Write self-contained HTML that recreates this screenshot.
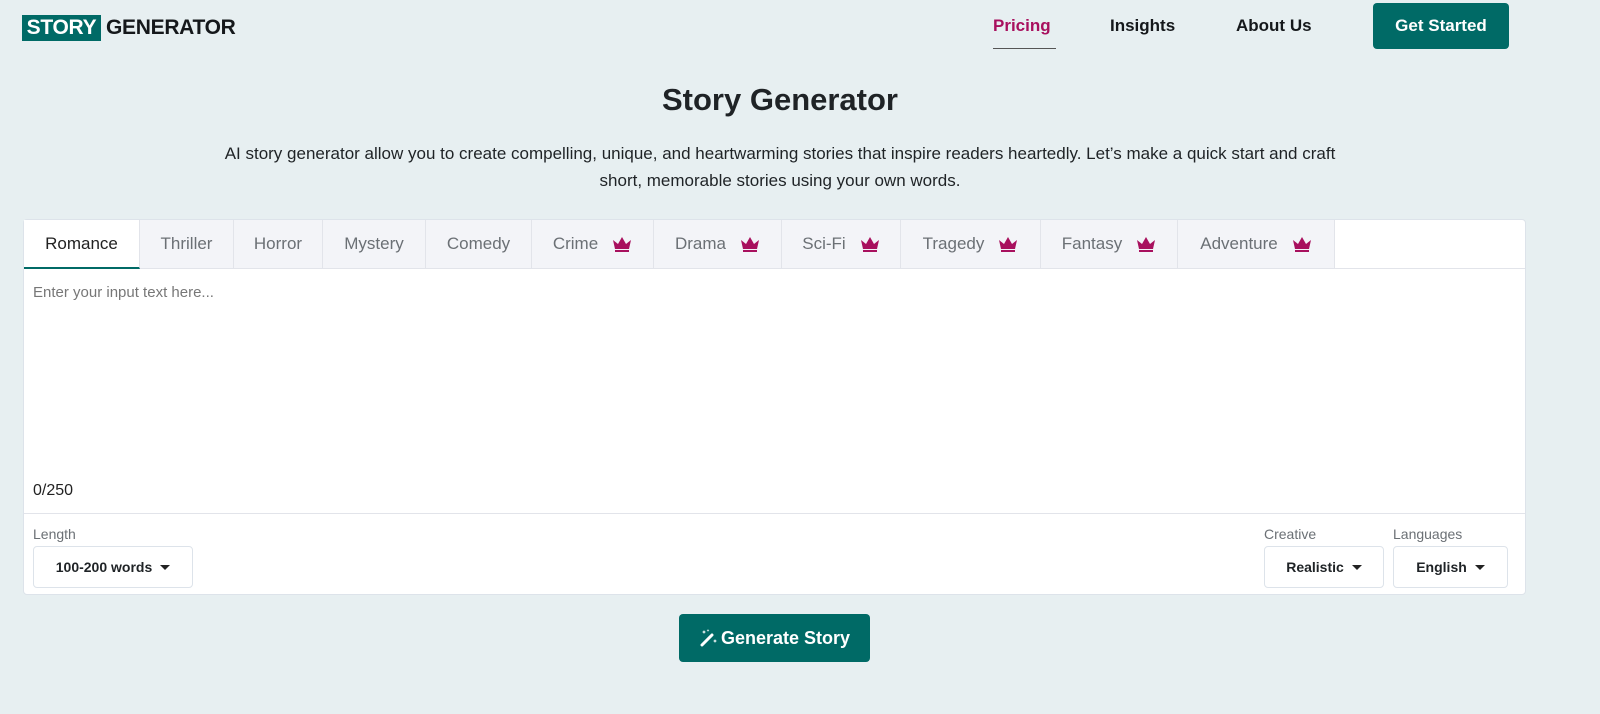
<!DOCTYPE html><html><head><style>
*{box-sizing:border-box;margin:0;padding:0}
body{width:1600px;height:714px;background:#e7eff1;font-family:"Liberation Sans",Arial,sans-serif;position:relative;overflow:hidden;color:#1f2326}
.a{position:absolute}
.logo1{left:22px;top:15px;width:79px;height:26px;background:#006a66;color:#fff;font-weight:700;font-size:21px;line-height:26px;text-align:center;letter-spacing:-0.3px}
.logo2{left:106px;top:15px;font-weight:700;font-size:21px;line-height:26px;color:#15181b;letter-spacing:-0.3px}
.nav{top:16px;font-weight:700;font-size:17px;color:#15181b}
.card{left:23px;top:219px;width:1503px;height:376px;background:#fff;border:1px solid #dde3ea;border-radius:4px}
.tab{top:0;height:49px;background:#f3f4f8;border-right:1px solid #e2e4ea;border-bottom:1px solid #e2e4ea;font-size:17px;color:#6b7075;display:flex;align-items:center;justify-content:center;gap:14px}
.crown{width:20px;height:16px}
.sel{border:1px solid #dde3ea;border-radius:4px;background:#fff;font-weight:700;font-size:14px;display:flex;align-items:center;justify-content:center;gap:8px;height:42px}
.car{border-left:5px solid transparent;border-right:5px solid transparent;border-top:5px solid #222}
.lab{font-size:14px;color:#6b7075}
</style></head><body>
<div class="a logo1">STORY</div><div class="a logo2">GENERATOR</div>
<div class="a nav" style="left:993px;color:#a8105e">Pricing</div>
<div class="a" style="left:993px;top:48px;width:63px;height:1px;background:#555"></div>
<div class="a nav" style="left:1110px">Insights</div>
<div class="a nav" style="left:1236px">About Us</div>
<div class="a" style="left:1373px;top:3px;width:136px;height:46px;background:#006a66;border-radius:4px;color:#fff;font-weight:700;font-size:17px;line-height:46px;text-align:center">Get Started</div>
<div class="a" style="left:0;width:1560px;top:82px;text-align:center;font-weight:700;font-size:31px">Story Generator</div>
<div class="a" style="left:172px;width:1216px;top:140px;text-align:center;font-size:17px;line-height:27px">AI story generator allow you to create compelling, unique, and heartwarming stories that inspire readers heartedly. Let’s make a quick start and craft<br>short, memorable stories using your own words.</div>
<div class="a card">
<div class="a tab" style="left:0;width:116px;background:#fff;color:#222;border-bottom:2px solid #006a66">Romance</div>
<div class="a tab" style="left:116px;width:94px">Thriller</div>
<div class="a tab" style="left:210px;width:89px">Horror</div>
<div class="a tab" style="left:299px;width:103px">Mystery</div>
<div class="a tab" style="left:402px;width:106px">Comedy</div>
<div class="a tab" style="left:508px;width:122px">Crime<svg class="crown" viewBox="0 0 20 16"><path d="M1 4l5 4 4-7 4 7 5-4-2 9H3z M3 14h14v2H3z" fill="#a8105e"/></svg></div>
<div class="a tab" style="left:630px;width:128px">Drama<svg class="crown" viewBox="0 0 20 16"><path d="M1 4l5 4 4-7 4 7 5-4-2 9H3z M3 14h14v2H3z" fill="#a8105e"/></svg></div>
<div class="a tab" style="left:758px;width:119px">Sci-Fi<svg class="crown" viewBox="0 0 20 16"><path d="M1 4l5 4 4-7 4 7 5-4-2 9H3z M3 14h14v2H3z" fill="#a8105e"/></svg></div>
<div class="a tab" style="left:877px;width:140px">Tragedy<svg class="crown" viewBox="0 0 20 16"><path d="M1 4l5 4 4-7 4 7 5-4-2 9H3z M3 14h14v2H3z" fill="#a8105e"/></svg></div>
<div class="a tab" style="left:1017px;width:137px">Fantasy<svg class="crown" viewBox="0 0 20 16"><path d="M1 4l5 4 4-7 4 7 5-4-2 9H3z M3 14h14v2H3z" fill="#a8105e"/></svg></div>
<div class="a tab" style="left:1154px;width:157px">Adventure<svg class="crown" viewBox="0 0 20 16"><path d="M1 4l5 4 4-7 4 7 5-4-2 9H3z M3 14h14v2H3z" fill="#a8105e"/></svg></div>
<div class="a" style="left:1311px;right:0;top:0;height:49px;border-bottom:1px solid #e2e4ea"></div>
<div class="a" style="left:9px;top:64px;font-size:15px;color:#777">Enter your input text here...</div>
<div class="a" style="left:9px;top:262px;font-size:16px;color:#222">0/250</div>
<div class="a" style="left:0;right:0;top:293px;height:1px;background:#e2e4ea"></div>
<div class="a lab" style="left:9px;top:306px">Length</div>
<div class="a sel" style="left:9px;top:326px;width:160px">100-200 words<span class="car"></span></div>
<div class="a lab" style="left:1240px;top:306px">Creative</div>
<div class="a sel" style="left:1240px;top:326px;width:120px">Realistic<span class="car"></span></div>
<div class="a lab" style="left:1369px;top:306px">Languages</div>
<div class="a sel" style="left:1369px;top:326px;width:115px">English<span class="car"></span></div>
</div>
<div class="a" style="left:679px;top:614px;width:191px;height:48px;background:#006a66;border-radius:4px;color:#fff;font-weight:700;font-size:18px;display:flex;align-items:center;justify-content:center;gap:2px">
<svg width="20" height="20" viewBox="0 0 20 20"><path d="M3 17L13 7" stroke="#fff" stroke-width="3" stroke-linecap="round"/><path d="M5 2l.6 1.4L7 4l-1.4.6L5 6l-.6-1.4L3 4l1.4-.6zM16 11l.6 1.4 1.4.6-1.4.6L16 15l-.6-1.4L14 13l1.4-.6zM9 1l.4 1 1 .4-1 .4L9 4l-.4-1.2-1-.4 1-.4z" fill="#fff"/></svg>Generate Story</div>
</body></html>
